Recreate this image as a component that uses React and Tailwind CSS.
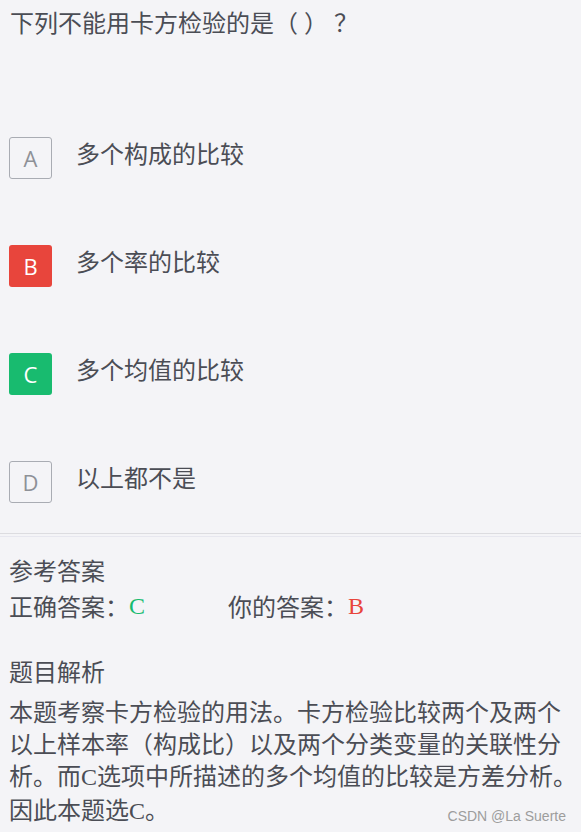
import React from 'react';

const options = [
  { key: 'A', text: '多个构成的比较', state: 'normal' },
  { key: 'B', text: '多个率的比较', state: 'wrong' },
  { key: 'C', text: '多个均值的比较', state: 'right' },
  { key: 'D', text: '以上都不是', state: 'normal' },
];

const boxStyles = {
  normal: 'border border-[#a9acb3] bg-transparent text-[#8e9197]',
  wrong: 'bg-[#e8453c] text-white',
  right: 'bg-[#18bb6f] text-white',
};

const Option = ({ item }) => (
  <div className="flex items-start">
    <div
      className={`w-[43px] h-[42px] rounded-[3px] flex items-center justify-center text-[22px] ${boxStyles[item.state]}`}
      style={{ fontFamily: '"Open Sans", "Noto Sans", sans-serif' }}
    >
      {item.key}
    </div>
    <span className="ml-[24px]">{item.text}</span>
  </div>
);

export default function App() {
  return (
    <div
      className="relative w-[581px] h-[832px] overflow-hidden bg-[#f4f4f7] text-[#4b4d55] text-[24px] leading-[32px] pl-[9px] pr-[1px] pt-[6px]"
      style={{ fontFamily: '"Noto Sans CJK SC", "Noto Sans", sans-serif' }}
    >
      {/* Question */}
      <div className="pl-[1px]">
        下列不能用卡方检验的是<span className="tracking-[6px]">（）？</span>
      </div>

      {/* Options */}
      <div className="mt-[99px] flex flex-col gap-[66px]">
        {options.map((o) => (
          <Option key={o.key} item={o} />
        ))}
      </div>

      {/* Divider */}
      <div className="mt-[30px] -ml-[9px] -mr-[1px] h-[4px] border-t border-b border-t-[#dcdce0] border-b-[#e7e7ef]" />

      {/* Reference answer */}
      <div className="mt-[17px]">参考答案</div>
      <div className="mt-[4px] flex">
        <div className="w-[219px] flex">
          <span>正确答案：</span>
          <span className="text-[#18bb6f]" style={{ fontFamily: '"Liberation Serif", serif' }}>C</span>
        </div>
        <div className="flex">
          <span>你的答案：</span>
          <span className="text-[#e8453c]" style={{ fontFamily: '"Liberation Serif", serif' }}>B</span>
        </div>
      </div>

      {/* Analysis */}
      <div className="mt-[33px]">题目解析</div>
      <p className="mt-[8px]">
        本题考察卡方检验的用法。卡方检验比较两个及两个以上样本率（构成比）以及两个分类变量的关联性分析。而
        <span style={{ fontFamily: '"Liberation Serif", serif' }}>C</span>
        选项中所描述的多个均值的比较是方差分析。因此本题选
        <span style={{ fontFamily: '"Liberation Serif", serif' }}>C</span>。
      </p>

      {/* Watermark */}
      <div
        className="absolute right-[15px] bottom-[7px] text-[14px] leading-[18px] text-[#9d9d9d]"
        style={{ fontFamily: '"Liberation Sans", Arial, sans-serif' }}
      >
        CSDN @La Suerte
      </div>
    </div>
  );
}
